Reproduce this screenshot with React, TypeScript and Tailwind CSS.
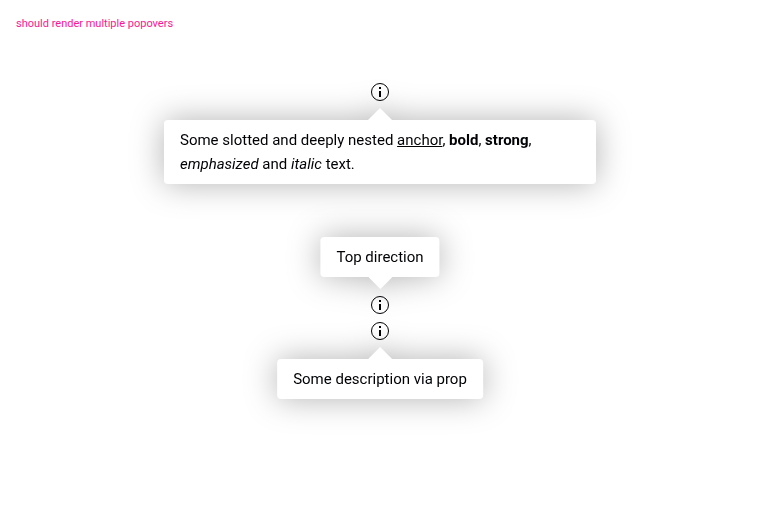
import { useId, type ReactNode } from 'react';

type Direction = 'top' | 'bottom';

function InfoIcon() {
  return (
    <svg viewBox="0 0 24 24" className="block size-6" aria-hidden="true">
      <circle cx="12" cy="12" r="8.5" fill="none" stroke="currentColor" />
      <path fill="currentColor" d="M11 7h2v2h-2zM11 11h2v6h-2z" />
    </svg>
  );
}

function Popover({ direction = 'bottom', children }: { direction?: Direction; children: ReactNode }) {
  const id = useId();
  const isTop = direction === 'top';
  return (
    <div className="relative size-6">
      <button type="button" aria-label="More information" aria-describedby={id} className="block size-6 rounded-full">
        <InfoIcon />
      </button>
      <div
        id={id}
        role="tooltip"
        className={`absolute left-1/2 flex w-max max-w-[432px] -translate-x-1/2 items-center drop-shadow-[0_0_16px_rgba(0,0,0,0.3)] ${
          isTop ? 'bottom-full mb-1 flex-col-reverse' : 'top-full mt-1 flex-col'
        }`}
      >
        <svg viewBox="0 0 24 12" className="block h-3 w-6" aria-hidden="true">
          <path fill="#fff" d={isTop ? 'M0 0h24L12 12z' : 'M0 12h24L12 0z'} />
        </svg>
        <div className="rounded bg-white px-4 py-2 text-[15px] leading-6">{children}</div>
      </div>
    </div>
  );
}

export default function App() {
  return (
    <main className="min-h-screen bg-white p-4 font-[Roboto,'Liberation_Sans',sans-serif] text-[#010205]">
      <p className="text-[11px] leading-4 text-[#ff1493]">should render multiple popovers</p>
      <div className="mt-12 flex flex-col items-center">
        <Popover>
          Some slotted and deeply nested{' '}
          <a href="#" className="underline">
            anchor
          </a>
          , <b className="font-bold">bold</b>, <strong className="font-bold">strong</strong>, <em>emphasized</em> and{' '}
          <i>italic</i> text.
        </Popover>
        <div className="mt-[189px] flex flex-col gap-0.5">
          <Popover direction="top">Top direction</Popover>
          <Popover>Some description via prop</Popover>
        </div>
      </div>
    </main>
  );
}
